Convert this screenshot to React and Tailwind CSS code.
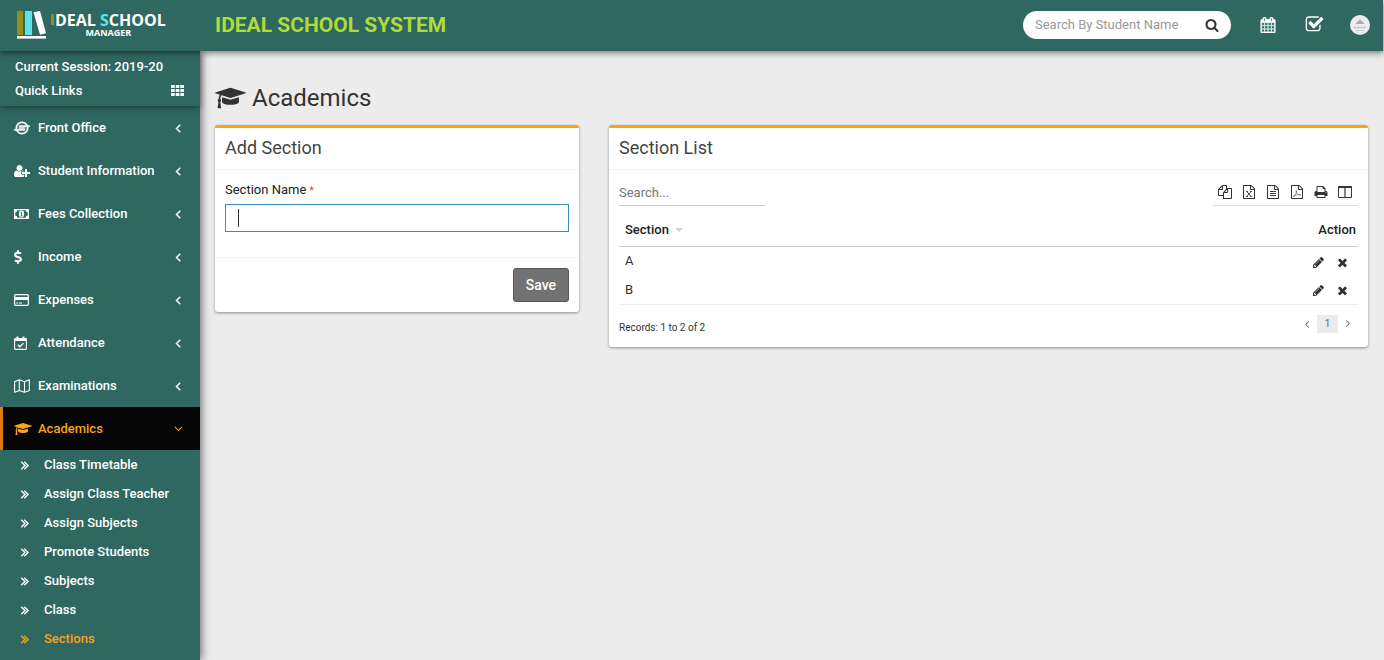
import React from 'react';
import { FaIoxhost, FaDollarSign } from 'react-icons/fa';

const Glyph = ({ d, box = '0 0 1792 1792', className = 'h-[14px] w-[14px]', bold, children }) => (
    <svg viewBox={box} className={className} fill="currentColor" aria-hidden="true">
        {d && <path d={d} stroke={bold ? 'currentColor' : 'none'} strokeWidth={bold || 0} />}
        {children}
    </svg>
);

const DOC = 'M1596 380q28 28 48 76t20 88v1152q0 40-28 68t-68 28h-1344q-40 0-68-28t-28-68v-1600q0-40 28-68t68-28h896q40 0 88 20t76 48zm-444-244v376h376q-10-29-22-41l-313-313q-12-12-41-22zm384 1528v-1024h-416q-40 0-68-28t-28-68v-416h-768v1536h1280z';

const PATHS = {
    cap: 'M1774 836l18 316q4 69-82 128t-235 93.5-323 34.5-323-34.5-235-93.5-82-128l18-316 574 181q22 7 48 7t48-7zm530-324q0 23-22 31l-1120 352q-4 1-10 1t-10-1l-652-206q-43 34-71 111.5t-34 178.5q63 36 63 109 0 69-58 107l58 433q2 14-8 25-9 11-24 11h-192q-15 0-24-11-10-11-8-25l58-433q-58-38-58-107 0-73 65-111 11-207 98-330l-333-104q-22-8-22-31t22-31l1120-352q4-1 10-1t10 1l1120 352q22 8 22 31z',
    userPlus: 'M704 896q-159 0-271.5-112.5t-112.5-271.5 112.5-271.5 271.5-112.5 271.5 112.5 112.5 271.5-112.5 271.5-271.5 112.5zm960 128h352q13 0 22.5 9.5t9.5 22.5v192q0 13-9.5 22.5t-22.5 9.5h-352v352q0 13-9.5 22.5t-22.5 9.5h-192q-13 0-22.5-9.5t-9.5-22.5v-352h-352q-13 0-22.5-9.5t-9.5-22.5v-192q0-13 9.5-22.5t22.5-9.5h352v-352q0-13 9.5-22.5t22.5-9.5h192q13 0 22.5 9.5t9.5 22.5v352zm-736 224q0 52 38 90t90 38h256v238q-68 50-171 50h-874q-121 0-194-69t-73-190q0-53 3.5-103.5t14-109 26.5-108.5 43-97.5 62-81 85.5-53.5 111.5-20q19 0 39 17 79 61 154.5 91.5t164.5 30.5 164.5-30.5 154.5-91.5q20-17 39-17 132 0 217 96h-223q-52 0-90 38t-38 90v192z',
    calendar: 'M192 1664h288v-288h-288v288zm352 0h320v-288h-320v288zm-352-352h288v-320h-288v320zm352 0h320v-320h-320v320zm-352-384h288v-288h-288v288zm736 736h320v-288h-320v288zm-384-736h320v-288h-320v288zm768 736h288v-288h-288v288zm-384-352h320v-320h-320v320zm-352-864v-288q0-13-9.5-22.5t-22.5-9.5h-64q-13 0-22.5 9.5t-9.5 22.5v288q0 13 9.5 22.5t22.5 9.5h64q13 0 22.5-9.5t9.5-22.5zm736 864h288v-320h-288v320zm-384-384h320v-288h-320v288zm384 0h288v-288h-288v288zm32-480v-288q0-13-9.5-22.5t-22.5-9.5h-64q-13 0-22.5 9.5t-9.5 22.5v288q0 13 9.5 22.5t22.5 9.5h64q13 0 22.5-9.5t9.5-22.5zm384-64v1280q0 52-38 90t-90 38h-1408q-52 0-90-38t-38-90v-1280q0-52 38-90t90-38h128v-96q0-66 47-113t113-47h64q66 0 113 47t47 113v96h384v-96q0-66 47-113t113-47h64q66 0 113 47t47 113v96h128q52 0 90 38t38 90z',
    checkSquare: 'M1472 930v318q0 119-84.5 203.5t-203.5 84.5h-832q-119 0-203.5-84.5t-84.5-203.5v-832q0-119 84.5-203.5t203.5-84.5h832q63 0 117 25 15 7 18 23 3 17-9 29l-49 49q-10 10-23 10-3 0-9-2-23-6-45-6h-832q-66 0-113 47t-47 113v832q0 66 47 113t113 47h832q66 0 113-47t47-113v-254q0-13 9-22l64-64q10-10 23-10 6 0 12 3 20 8 20 29zm231-489l-814 814q-24 24-57 24t-57-24l-430-430q-24-24-24-57t24-57l110-110q24-24 57-24t57 24l263 263 647-647q24-24 57-24t57 24l110 110q24 24 24 57t-24 57z',
    search: 'M1216 832q0-185-131.5-316.5t-316.5-131.5-316.5 131.5-131.5 316.5 131.5 316.5 316.5 131.5 316.5-131.5 131.5-316.5zm512 832q0 52-38 90t-90 38q-54 0-90-38l-343-342q-179 124-399 124-143 0-273.5-55.5t-225-150-150-225-55.5-273.5 55.5-273.5 150-225 225-150 273.5-55.5 273.5 55.5 225 150 150 225 55.5 273.5q0 220-124 399l343 343q37 37 37 90z',
    pencil: 'M491 1536l91-91-235-235-91 91v107h128v128h107zm523-928q0-22-22-22-10 0-17 7l-542 542q-7 7-7 17 0 22 22 22 10 0 17-7l542-542q7-7 7-17zm-54-192l416 416-832 832h-416v-416zm683 96q0 53-37 90l-166 166-416-416 166-165q36-38 90-38 53 0 91 38l235 234q37 39 37 91z',
    times: 'M1490 1322q0 40-28 68l-136 136q-28 28-68 28t-68-28l-294-294-294 294q-28 28-68 28t-68-28l-136-136q-28-28-28-68t28-68l294-294-294-294q-28-28-28-68t28-68l136-136q28-28 68-28t68 28l294 294 294-294q28-28 68-28t68 28l136 136q28 28 28 68t-28 68l-294 294 294 294q28 28 28 68z',
    angleLeft: 'M1203 544q0 13-10 23l-393 393 393 393q10 10 10 23t-10 23l-50 50q-10 10-23 10t-23-10l-466-466q-10-10-10-23t10-23l466-466q10-10 23-10t23 10l50 50q10 10 10 23z',
    doubleRight: 'M979 960q0 13-10 23l-466 466q-10 10-23 10t-23-10l-50-50q-10-10-10-23t10-23l393-393-393-393q-10-10-10-23t10-23l50-50q10-10 23-10t23 10l466 466q10 10 10 23zm384 0q0 13-10 23l-466 466q-10 10-23 10t-23-10l-50-50q-10-10-10-23t10-23l393-393-393-393q-10-10-10-23t10-23l50-50q10-10 23-10t23 10l466 466q10 10 10 23z',
    copy: 'M1696 384q40 0 68 28t28 68v1216q0 40-28 68t-68 28h-960q-40 0-68-28t-28-68v-288h-544q-40 0-68-28t-28-68v-672q0-40 20-88t48-76l408-408q28-28 76-48t88-20h416q40 0 68 28t28 68v328q68-40 128-40h416zm-544 213l-299 299h299v-299zm-640-384l-299 299h299v-299zm196 647l316-316v-416h-384v416q0 40-28 68t-68 28h-416v640h512v-256q0-40 20-88t48-76zm956 804v-1152h-384v416q0 40-28 68t-68 28h-416v640h896z',
    print: 'M448 1536h896v-256h-896v256zm0-640h896v-384h-160q-40 0-68-28t-28-68v-160h-640v640zm1152 64q0-26-19-45t-45-19-45 19-19 45 19 45 45 19 45-19 19-45zm128 0v416q0 13-9.5 22.5t-22.5 9.5h-224v160q0 40-28 68t-68 28h-960q-40 0-68-28t-28-68v-160h-224q-13 0-22.5-9.5t-9.5-22.5v-416q0-79 56.5-135.5t135.5-56.5h64v-544q0-40 28-68t68-28h672q40 0 88 20t76 48l152 152q28 28 48 76t20 88v256h64q79 0 135.5 56.5t56.5 135.5z',
};

const CapIcon = ({ className }) => <Glyph d={PATHS.cap} box="0 0 2304 1792" className={className} />;

const MoneyIcon = () => (
    <svg viewBox="0 0 15 10" className="h-[10px] w-[15px]" fill="none" stroke="currentColor" aria-hidden="true">
        <path d="M.6.6h13.8v8.8H.6z" strokeWidth="1.2" />
        <path d="M1 1h2.4A2.4 2.4 0 0 1 1 3.4zM14 1h-2.4A2.4 2.4 0 0 0 14 3.4zM1 9h2.4A2.4 2.4 0 0 0 1 6.6zM14 9h-2.4A2.4 2.4 0 0 1 14 6.6z" fill="currentColor" stroke="none" />
        <ellipse cx="7.5" cy="5" rx="2.7" ry="3.4" fill="currentColor" stroke="none" />
        <path d="M6.7 3.6l.9-.6v3.8M6.6 6.9h2" stroke="#2f6860" strokeWidth=".9" />
    </svg>
);

const CardIcon = () => (
    <svg viewBox="0 0 15 12" className="h-[12px] w-[15px]" fill="none" stroke="currentColor" aria-hidden="true">
        <rect x=".6" y=".6" width="13.8" height="10.8" rx="1.2" strokeWidth="1.2" />
        <path d="M.6 4.5h13.8" strokeWidth="3" />
        <path d="M2.2 9h2M5 9h3" />
    </svg>
);

const CalendarCheckIcon = () => (
    <svg viewBox="0 0 13 14" className="h-[14px] w-[13px]" fill="none" stroke="currentColor" aria-hidden="true">
        <rect x=".6" y="2.6" width="11.8" height="10.8" rx=".8" strokeWidth="1.1" />
        <path d="M.6 3.7h11.8" strokeWidth="2.6" />
        <path d="M3.5.4v3M9.5.4v3" strokeWidth="2" />
        <path d="M3.8 8.8l2 2 3.7-3.7" strokeWidth="1.3" />
    </svg>
);

const MapIcon = () => (
    <svg viewBox="0 0 16 14" className="h-[14px] w-[16px]" fill="none" stroke="currentColor" strokeLinejoin="round" aria-hidden="true">
        <path d="M.6 2.7L5.3.8l5.2 1.9L15.4.8v10.6l-4.9 1.9-5.2-1.9-4.7 1.9zM5.3.8v10.6M10.5 2.7v10.6" strokeWidth="1.1" />
    </svg>
);

const ExcelIcon = () => (
    <Glyph d={DOC}>
        <path d="M610 830l560 640M1170 830l-560 640M520 830h230M1030 830h230M520 1470h230M1030 1470h230" stroke="currentColor" strokeWidth="115" />
    </Glyph>
);

const TextFileIcon = () => (
    <Glyph d={DOC}>
        <path d="M512 832h768M512 1088h768M512 1344h768" stroke="currentColor" strokeWidth="120" />
    </Glyph>
);

const PdfIcon = () => (
    <Glyph d={DOC}>
        <path d="M420 1500c180-60 400-400 430-760 0-70-90-70-80 10 30 260 250 480 520 560 80 10 90-60 10-80-280-20-620 60-860 190-60 40-70 80-20 80z" fill="none" stroke="currentColor" strokeWidth="65" />
    </Glyph>
);

const ColumnsIcon = () => (
    <Glyph box="0 0 14 14">
        <path d="M1 1h12a1 1 0 0 1 1 1v10a1 1 0 0 1-1 1H1a1 1 0 0 1-1-1V2a1 1 0 0 1 1-1zm0 2v9h5.4V3zm6.6 0v9H13V3z" fillRule="evenodd" />
    </Glyph>
);

const menu = [
    { label: 'Front Office', icon: <FaIoxhost size={16} stroke="currentColor" strokeWidth={20} /> },
    { label: 'Student Information', icon: <Glyph d={PATHS.userPlus} box="0 0 2048 1792" className="h-[14px] w-[16px]" /> },
    { label: 'Fees Collection', icon: <MoneyIcon /> },
    { label: 'Income', icon: <FaDollarSign size={14} className="-ml-[3px]" /> },
    { label: 'Expenses', icon: <CardIcon /> },
    { label: 'Attendance', icon: <CalendarCheckIcon /> },
    { label: 'Examinations', icon: <MapIcon /> },
    { label: 'Academics', icon: <CapIcon className="h-[14px] w-[18px]" />, active: true },
];

const subMenu = ['Class Timetable', 'Assign Class Teacher', 'Assign Subjects', 'Promote Students', 'Subjects', 'Class', 'Sections'];

const tools = [
    { label: 'Copy', icon: <Glyph d={PATHS.copy} /> },
    { label: 'Excel', icon: <ExcelIcon /> },
    { label: 'CSV', icon: <TextFileIcon /> },
    { label: 'PDF', icon: <PdfIcon /> },
    { label: 'Print', icon: <Glyph d={PATHS.print} /> },
    { label: 'Columns', icon: <ColumnsIcon /> },
];

const Logo = () => (
    <a href="#" className="flex w-[200px] shrink-0 items-center pl-4 text-white">
        <svg viewBox="0 0 31 28" className="h-[28px] w-[31px]" aria-hidden="true">
            <path d="M1 0h6v24H1z" fill="#938f1f" />
            <path d="M9 0h7v24H9z" fill="#5ee3ea" />
            <path d="M17.5 1.2L24 0l6 22.2-6 1.6z" fill="#fff" />
            <path d="M1 25h29v2.6H1z" fill="#fff" />
        </svg>
        <div className="ml-1 flex flex-col font-['Open_Sans',sans-serif] font-bold">
            <div className="flex items-center text-[16px] leading-4">
                <span className="mr-px h-[11px] w-[3px] bg-[#938f1f]" />
                <span className="leading-4">DEAL <span className="text-[#5ee3ea]">S</span>CHOOL</span>
            </div>
            <span className="text-center text-[9px] leading-[10px]">MANAGER</span>
        </div>
    </a>
);

const Header = () => (
    <header className="relative z-20 flex h-[51px] items-center bg-[#2f6860] pb-[2px] shadow-[0_2px_6px_rgba(0,0,0,0.5)]">
        <Logo />
        <span className="ml-[15px] grow text-[21px] font-bold leading-6 text-[#afdc36]">IDEAL SCHOOL SYSTEM</span>
        <form className="mr-[29px] flex h-[28px] w-[208px] items-center rounded-full bg-white px-3">
            <input
                type="text"
                aria-label="Search By Student Name"
                placeholder="Search By Student Name"
                className="w-[147px] text-[13px] text-[#444] outline-none placeholder:text-[#999]"
            />
            <button type="button" aria-label="Search" className="ml-auto text-[#333]">
                <Glyph d={PATHS.search} />
            </button>
        </form>
        <a href="#" aria-label="Calendar" className="mr-[29px] text-white"><Glyph d={PATHS.calendar} bold={40} className="h-[16px] w-[16px]" /></a>
        <a href="#" aria-label="Tasks" className="mr-[26px] text-white"><Glyph d={PATHS.checkSquare} className="h-[19px] w-[19px]" /></a>
        <a href="#" aria-label="Profile" className="mr-[13px]">
            <svg viewBox="0 0 20 20" className="h-[20px] w-[20px]" aria-hidden="true">
                <circle cx="10" cy="10" r="10" fill="#ececec" />
                <path d="M6 7.500h8v1.500H6zM7.500 6h5v1.500h-5zM9 4.500h2V6H9z" fill="#aaa" />
                <path d="M4 12.500h2M7 12.500h2.500M10.500 12.500h2M13.500 12.500h2" stroke="#bbb" strokeWidth="1.500" />
                <path d="M6 15.500h8" stroke="#d0d0d0" />
            </svg>
        </a>
    </header>
);

const Sidebar = () => (
    <aside className="relative z-10 w-[200px] shrink-0 bg-[#2f6860] text-[13px] font-medium text-white shadow-[2px_0_8px_rgba(0,0,0,0.5)]">
        <div className="flex h-[55px] flex-col justify-center pl-[15px] pr-4 leading-6 shadow-[0_2px_6px_rgba(0,0,0,0.4)]">
            <span>Current Session: 2019-20</span>
            <a href="#" className="flex items-center justify-between">
                Quick Links
                <Glyph box="0 0 13 11" className="h-[11px] w-[13px]">
                    <path d="M0 0h3.700v3H0zM4.700 0h3.700v3H4.700zM9.300 0H13v3H9.300zM0 4h3.700v3H0zM4.700 4h3.700v3H4.700zM9.300 4H13v3H9.300zM0 8h3.700v3H0zM4.700 8h3.700v3H4.700zM9.300 8H13v3H9.300z" />
                </Glyph>
            </a>
        </div>
        <nav>
            {menu.map((item) => (
                <a
                    key={item.label}
                    href="#"
                    className={`flex h-[43px] items-center border-l-[3px] pl-[11px] pr-[15px] ${item.active ? 'border-[#e27a10] bg-[#060606] text-[#faa21c]' : 'border-transparent'}`}
                >
                    <span className="flex w-[24px] shrink-0 items-center">{item.icon}</span>
                    <span className="grow">{item.label}</span>
                    <Glyph d={PATHS.angleLeft} bold={item.active ? 0 : 60} className={item.active ? 'h-[14px] w-[14px] -rotate-90' : 'h-[14px] w-[14px]'} />
                </a>
            ))}
            {subMenu.map((label) => (
                <a
                    key={label}
                    href="#"
                    className={`flex h-[29px] items-center pl-[18px] ${label === 'Sections' ? 'text-[#faa21c]' : ''}`}
                >
                    <Glyph d={PATHS.doubleRight} bold={60} className="mr-3 h-[14px] w-[14px]" />
                    {label}
                </a>
            ))}
        </nav>
    </aside>
);

const Card = ({ title, className, children }) => (
    <section className={`rounded-[3px] border-t-[3px] border-[#faa21c] bg-white shadow-[0_1px_3px_rgba(0,0,0,0.4)] ${className}`}>
        <h2 className="border-b border-[#f4f4f4] px-[10px] pb-[9px] pt-[7px] text-[18px] leading-[25px] text-[#444]">{title}</h2>
        {children}
    </section>
);

const AddSection = () => (
    <Card title="Add Section" className="min-w-0 flex-[364]">
        <form>
            <div className="px-[10px] pb-[25px] pt-[10px]">
                <label htmlFor="section" className="mb-1 block text-[13px] leading-[19px] text-[#222]">
                    Section Name <small className="text-[10px] text-red-500">*</small>
                </label>
                <div className="relative">
                    <input id="section" type="text" className="block h-[28px] w-full border border-[#3c8dbc] px-3 text-[13px] caret-transparent outline-none" />
                    <span className="absolute left-[13px] top-[5px] h-[18px] w-px bg-[#333]" />
                </div>
            </div>
            <div className="flex justify-end border-t border-[#f4f4f4] p-[10px]">
                <button type="button" className="h-[34px] rounded-[3px] border border-[#555] bg-[#727272] px-3 text-[14px] font-medium text-white">Save</button>
            </div>
        </form>
    </Card>
);

const SectionList = () => (
    <Card title="Section List" className="min-w-0 flex-[759]">
        <div className="px-[10px] pb-[11px] pt-[9px] text-[#333]">
            <div className="flex items-end justify-between">
                <input
                    type="search"
                    aria-label="Search"
                    placeholder="Search..."
                    className="h-[26px] w-[146px] border-b border-[#ccc] text-[13px] outline-none placeholder:text-[#777]"
                />
                <div className="flex h-[27px] items-center gap-[10px] border-b border-[#ddd] pl-[5px] pr-[6px]">
                    {tools.map((tool) => (
                        <button key={tool.label} type="button" aria-label={tool.label}>{tool.icon}</button>
                    ))}
                </div>
            </div>
            <table className="mt-2 w-full border-b border-[#eee] text-[13px]">
                <thead>
                    <tr className="h-[32px] border-b border-[#ccc]">
                        <th className="pl-[6px] text-left font-medium text-[#222]">
                            <span className="flex items-center gap-[6px]">
                                Section
                                <Glyph box="0 0 8 4" className="h-[4px] w-[8px] text-[#d0d0d0]"><path d="M0 0h8L4 4z" /></Glyph>
                            </span>
                        </th>
                        <th className="pr-[2px] text-right font-medium text-[#222]">Action</th>
                    </tr>
                </thead>
                <tbody>
                    {['A', 'B'].map((name) => (
                        <tr key={name} className="h-[29px]">
                            <td className="pl-[6px]">{name}</td>
                            <td>
                                <div className="flex justify-end gap-[11px] pr-[9px] pt-[3px]">
                                    <button type="button" aria-label={`Edit ${name}`}><Glyph d={PATHS.pencil} className="h-[13px] w-[13px]" /></button>
                                    <button type="button" aria-label={`Delete ${name}`}><Glyph d={PATHS.times} className="h-[13px] w-[13px]" /></button>
                                </div>
                            </td>
                        </tr>
                    ))}
                </tbody>
            </table>
            <div className="mt-[10px] flex items-start justify-between text-[10px]">
                <span className="mt-[5px] leading-4">Records: 1 to 2 of 2</span>
                <div className="flex items-center text-[#666]">
                    <button type="button" aria-label="Previous page" className="px-1"><Glyph d={PATHS.angleLeft} className="h-[12px] w-[12px]" /></button>
                    <button type="button" className="h-[18px] w-[21px] bg-[#ebebeb]">1</button>
                    <button type="button" aria-label="Next page" className="px-1"><Glyph d={PATHS.angleLeft} className="h-[12px] w-[12px] rotate-180" /></button>
                </div>
            </div>
        </div>
    </Card>
);

const App = () => (
    <div className="flex min-h-screen flex-col bg-[#ececec] pr-px font-['Roboto',sans-serif]">
        <Header />
        <div className="flex grow">
            <Sidebar />
            <main className="min-w-0 grow px-[15px] pt-[31px]">
                <h1 className="flex items-center gap-[6px] text-[24px] leading-8 text-[#333]">
                    <CapIcon className="h-[24px] w-[31px]" />
                    Academics
                </h1>
                <div className="mt-[11px] flex items-start gap-[30px]">
                    <AddSection />
                    <SectionList />
                </div>
            </main>
        </div>
    </div>
);

export default App;
